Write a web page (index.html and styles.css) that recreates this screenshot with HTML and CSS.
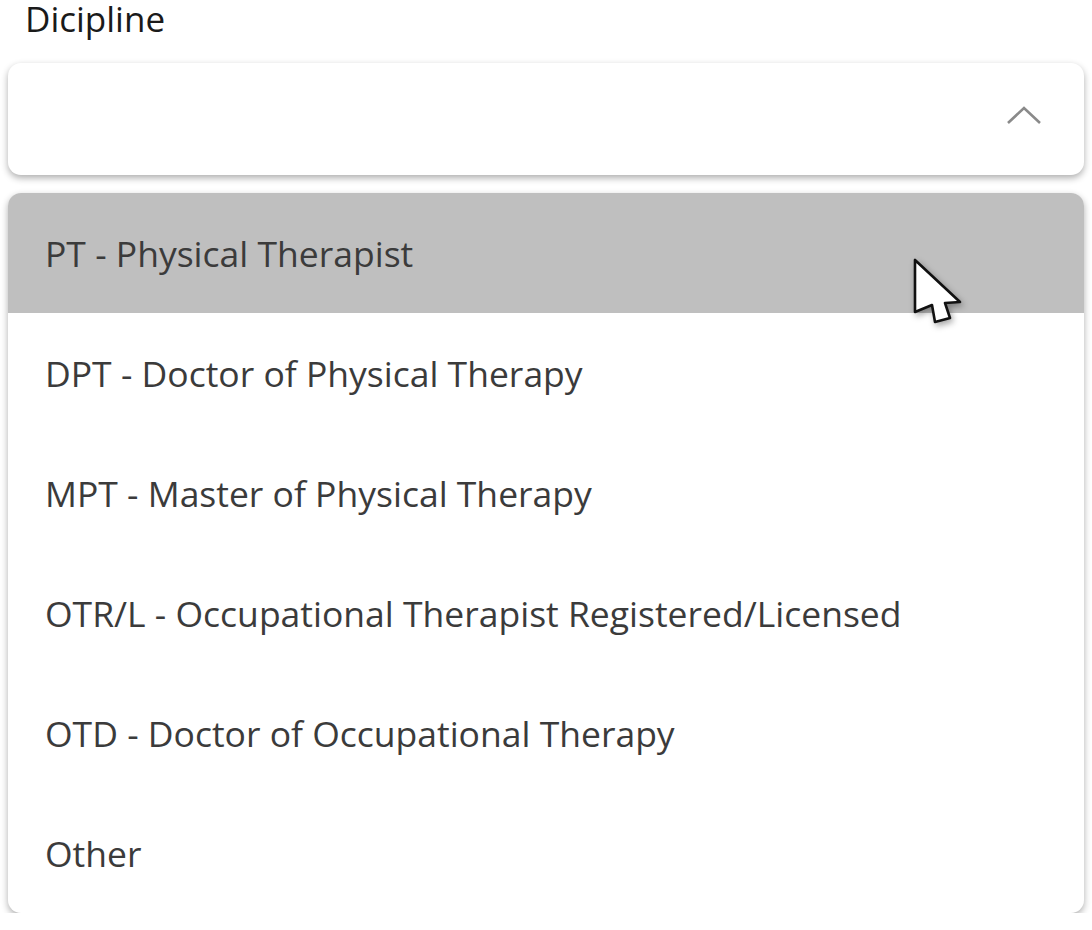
FILE: index.html
```html
<!DOCTYPE html>
<html lang="en">
<head>
  <meta charset="UTF-8">
  <meta name="viewport" content="width=device-width, initial-scale=1.0">
  <title>Dicipline</title>
  <link rel="stylesheet" href="styles.css">
</head>
<body>
  <div class="field">
    <label class="field-label">Dicipline</label>

    <div class="select">
      <svg class="chevron" width="36" height="20" viewBox="0 0 36 20">
        <polyline points="2,18 18,3 34,18" fill="none" stroke="#8a8a8a" stroke-width="2.6" />
      </svg>
    </div>

    <ul class="menu">
      <li class="option active">
        PT - Physical Therapist
        <svg class="cursor" width="52" height="72" viewBox="-3 -3 52 72">
          <path d="M0,0 L0,52 L17,45 L20,62 L35,58 L30,43 L45,42 Z" fill="#fff" stroke="#111" stroke-width="2.6" stroke-linejoin="round" />
        </svg>
      </li>
      <li class="option">DPT - Doctor of Physical Therapy</li>
      <li class="option">MPT - Master of Physical Therapy</li>
      <li class="option">OTR/L - Occupational Therapist Registered/Licensed</li>
      <li class="option">OTD - Doctor of Occupational Therapy</li>
      <li class="option">Other</li>
    </ul>
  </div>
</body>
</html>
```

FILE: styles.css
```css
body {
  font-family: "Open Sans", "Noto Sans", sans-serif;
  margin: 0;
  padding: 0 8px;
  background: #fff;
}

.field {
  padding-top: 1px;
}

.field-label {
  display: block;
  margin-left: 17px;
  font-size: 35px;
  line-height: 36px;
  color: #1a1a1a;
}

.select {
  position: relative;
  height: 112px;
  margin-top: 26px;
  background: #fff;
  border-radius: 13px;
  box-shadow: 0 3px 7px rgba(0, 0, 0, 0.32);
  display: flex;
  align-items: center;
  justify-content: flex-end;
  padding-right: 42px;
}

.chevron {
  display: block;
  margin-bottom: 8px;
}

.menu {
  list-style: none;
  margin: 18px 0 0;
  padding: 0;
  background: #fff;
  border-radius: 13px;
  overflow: hidden;
  box-shadow: 0 3px 7px rgba(0, 0, 0, 0.32);
}

.option {
  position: relative;
  height: 120px;
  display: flex;
  align-items: center;
  padding-left: 37px;
  font-size: 35.5px;
  color: #3b3b3b;
}

.option.active {
  background: #bfbfbf;
}

.cursor {
  position: absolute;
  left: 904px;
  top: 64px;
  filter: drop-shadow(2px 3px 3px rgba(0, 0, 0, 0.35));
  z-index: 2;
}
```
